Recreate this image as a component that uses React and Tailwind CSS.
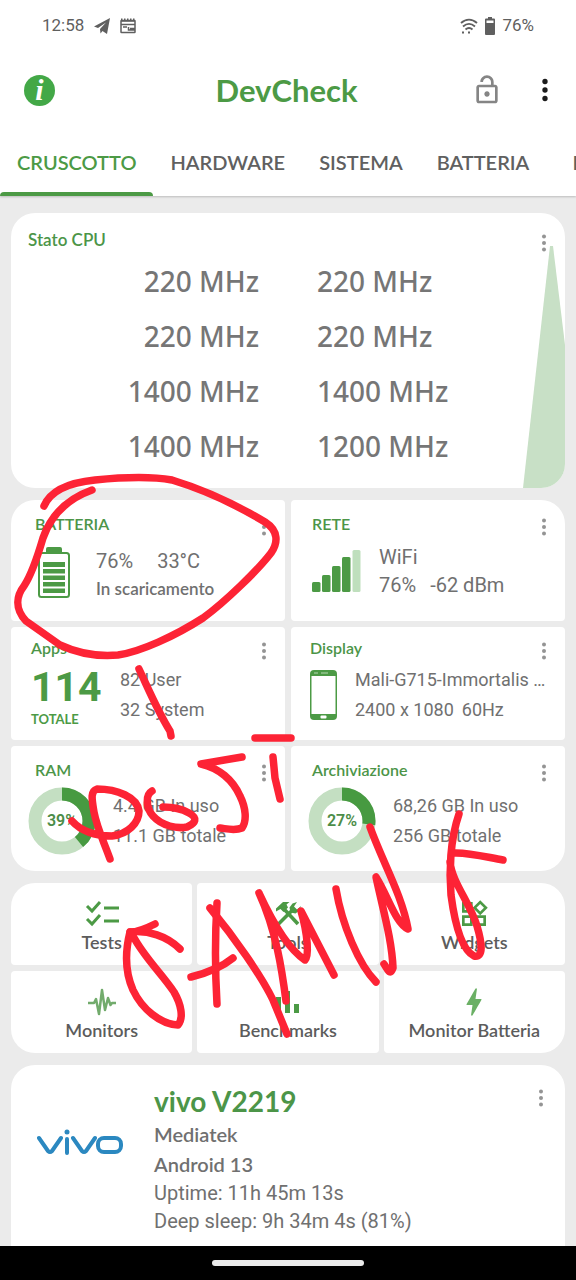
import React, { useState } from "react";
import { MdBolt, MdOutlineLockOpen, MdOutlineWidgets } from "react-icons/md";

const TABS = ["CRUSCOTTO", "HARDWARE", "SISTEMA", "BATTERIA", "RETE"];

const CORES = [
  ["220 MHz", "220 MHz"],
  ["220 MHz", "220 MHz"],
  ["1400 MHz", "1400 MHz"],
  ["1400 MHz", "1200 MHz"],
];

// finger strokes drawn on top of the dashboard
const STROKES = [
  "M44 506C50 492 65 483 95 480C125 477 155 477 172 480C205 490 240 507 265 522C279 531 278 543 271 553C258 570 225 602 203 618C175 636 140 652 118 655C95 657 75 652 60 645L26 621C14 608 17 595 24 586C32 574 38 555 43 538C50 518 64 500 92 490",
  "M139 669C148 688 158 712 170 731L171 736",
  "M255 738H291",
  "M72 821C82 832 98 836 112 836C128 834 139 823 139 811C137 797 117 789 97 789C90 791 92 800 94 812C97 828 104 842 110 859",
  "M152 791C145 795 146 808 153 816C162 826 177 829 187 827C196 823 198 818 189 813C182 809 172 807 163 807",
  "M242 757L201 764C219 768 233 780 240 796C246 808 247 821 242 828C235 831 228 829 220 828",
  "M273 757L275 778L280 799",
  "M155 924C147 928 138 932 130 932C148 930 167 936 180 949",
  "M130 932C125 952 125 972 133 990C142 1009 160 1024 178 1025C184 1018 181 1004 174 992C162 974 144 957 133 936",
  "M217 903C215 935 215 970 217 1004",
  "M191 977C207 973 222 967 233 958",
  "M210 908C235 938 262 977 273 1000L287 1034",
  "M286 1001C282 970 276 930 259 893C272 921 288 949 305 960C309 956 308 935 301 911L334 975",
  "M336 889C342 925 359 965 376 982",
  "M370 827C383 863 402 895 408 929C396 924 388 896 376 877C383 910 392 940 393 968C390 976 388 970 384 964",
  "M459 814C450 840 449 872 451 895C455 925 462 950 474 956C484 958 482 943 477 926C470 903 452 882 450 862",
  "M453 853C468 852 486 857 503 860",
];

function Dots({ className }) {
  return (
    <svg viewBox="0 0 6 20" className={className} fill="currentColor">
      <circle cx="3" cy="3.6" r="2" />
      <circle cx="3" cy="10" r="2" />
      <circle cx="3" cy="16.4" r="2" />
    </svg>
  );
}

function MenuButton() {
  return (
    <button aria-label="Menu" className="mt-[3px] shrink-0 text-[#949494]">
      <Dots className="h-5 w-1.5" />
    </button>
  );
}

function Title({ children }) {
  return (
    <h2 className="font-['Lato',sans-serif] text-base leading-5 font-semibold text-[#4c9548]">
      {children}
    </h2>
  );
}

function Tile({ title, className, children }) {
  return (
    <section className={`rounded-sm bg-white pr-[18px] ${className}`}>
      <div className="flex items-start justify-between">
        <Title>{title}</Title>
        <MenuButton />
      </div>
      {children}
    </section>
  );
}

function Donut({ value }) {
  const length = 2 * Math.PI * 27;
  return (
    <div className="relative flex h-[68px] w-[68px] shrink-0 items-center justify-center">
      <svg viewBox="0 0 68 68" className="absolute inset-0 -rotate-90" fill="none">
        <circle cx="34" cy="34" r="27" stroke="#c4dfc2" strokeWidth="13" />
        <circle
          cx="34"
          cy="34"
          r="27"
          stroke="#479a41"
          strokeWidth="13"
          strokeDasharray={`${(length * value) / 100} ${length}`}
        />
      </svg>
      <span className="relative text-base font-semibold text-[#4c8d48]">{value}%</span>
    </div>
  );
}

function BatteryIcon() {
  return (
    <svg viewBox="0 0 32 52" className="h-[52px] w-8 shrink-0" fill="#4c9a45">
      <rect x="8" y="0" width="16" height="7" rx="2" />
      <rect x="1" y="6" width="30" height="44" rx="2.5" fill="none" stroke="#4c9a45" strokeWidth="2" />
      <path d="M5 15h22v5H5zM5 22h22v4.500H5zM5 28.500h22V33H5zM5 35h22v4.500H5zM5 41.500h22V46H5z" />
    </svg>
  );
}

function SignalIcon() {
  return (
    <svg viewBox="0 0 50 42" className="h-[42px] w-[50px] shrink-0" fill="#4c9a45">
      <rect x="0" y="32" width="8.500" height="10" rx="1.500" />
      <rect x="10" y="25" width="8.500" height="17" rx="1.500" />
      <rect x="20" y="16" width="8.500" height="26" rx="1.500" />
      <rect x="30" y="7" width="8.500" height="35" rx="1.500" />
      <rect x="40.500" y="0" width="8" height="42" rx="1.500" fill="#bfdfbd" />
    </svg>
  );
}

function PhoneIcon() {
  return (
    <svg viewBox="0 0 28 50" className="h-[50px] w-7 shrink-0">
      <rect width="27" height="50" rx="4" fill="#4c9a45" />
      <rect x="1.500" y="6" width="24" height="38" fill="#fff" />
      <rect x="10.500" y="45.500" width="6" height="3" rx="1" fill="#fff" />
      <path d="M4 3h4M11 3h7" stroke="#b7d8b4" />
    </svg>
  );
}

function ChecksIcon() {
  return (
    <svg viewBox="0 0 34 32" className="h-8 w-[34px]" fill="none" stroke="currentColor" strokeWidth="3">
      <path d="M2 8l5 5 8-9M2 21l5 5 8-9M19 10h15M19 23h15" />
    </svg>
  );
}

function ToolsIcon() {
  return (
    <svg viewBox="0 0 32 32" className="h-8 w-8" fill="none" stroke="currentColor" strokeWidth="3.600">
      {/* hammer */}
      <path d="M12 11l14 15" />
      <path d="M4 13.500V10.500L11 4h6.500l-3 2.500 1.500 3-4.500 4.500-3-3z" fill="currentColor" stroke="none" />
      {/* wrench */}
      <path d="M6 26.500L21 11.500" />
      <path d="M25 4l-4.500 1.500-3 4 1 5 5 1 4-3L29 8l-4 3.500-3-3z" fill="currentColor" stroke="none" />
    </svg>
  );
}

function PulseIcon() {
  return (
    <svg viewBox="0 0 32 32" className="h-8 w-8" fill="none" stroke="#72ab6c" strokeWidth="2.500" strokeLinejoin="round">
      <path d="M2 17h6l2-4 3 15 3-24 3 20 3-12 2.500 7 1.500-2h4" />
    </svg>
  );
}

function BarsIcon() {
  return (
    <svg viewBox="0 0 32 32" className="h-8 w-8" fill="#4c9a45">
      <path d="M4 11h5v16H4zM13 5h5v22h-5zM22 18h5v9h-5z" />
    </svg>
  );
}

const ACTIONS = [
  { label: "Tests", icon: <ChecksIcon />, corner: "rounded-tl-3xl" },
  { label: "Tools", icon: <ToolsIcon />, corner: "" },
  { label: "Widgets", icon: <MdOutlineWidgets className="h-8 w-8" />, corner: "rounded-tr-3xl" },
  { label: "Monitors", icon: <PulseIcon />, corner: "rounded-bl-3xl" },
  { label: "Benchmarks", icon: <BarsIcon />, corner: "" },
  { label: "Monitor Batteria", icon: <MdBolt className="h-9 w-9 text-[#6bb065]" />, corner: "rounded-br-3xl" },
];

function StatusBar() {
  return (
    <div className="flex h-[52px] items-center justify-between px-[42px] text-[17px] text-[#5f5f5f]">
      <div className="flex items-center gap-2.5">
        <span>12:58</span>
        <svg viewBox="0 0 16 16" className="h-4 w-4" fill="currentColor">
          <path d="M16 0L13 16L8.500 13L6.500 15.500L6 11L12 4.500L4 10L0 8.500z" />
        </svg>
        <svg viewBox="0 0 16 16" className="h-4 w-4" fill="none" stroke="currentColor" strokeWidth="1.500">
          <rect x="1" y="2.500" width="14" height="12" rx="0.5" />
          <path d="M1 3h14M1 6.500h14M10 10.500h5M8.500 9v3h6.500M3 9h4" />
          <path d="M1 1.200h14" strokeDasharray="1.500 1.500" />
        </svg>
      </div>
      <div className="flex items-center gap-1.5">
        <svg viewBox="0 0 18 18" className="h-[18px] w-[18px]" fill="none" stroke="currentColor" strokeWidth="1.900">
          <path d="M1 6c5-4.500 11-4.500 16 0M3 9.500c4-3.500 8-3.500 12 0M5.500 12.500c2.300-2 4.700-2 7 0" />
          <path d="M8 15.500h2M2 15.500h2" strokeWidth="2" />
        </svg>
        <svg viewBox="0 0 12 18" className="h-[18px] w-3" fill="currentColor">
          <path d="M4 0h4v1.500h2q1 0 1 1V17q0 1-1 1H2q-1 0-1-1V2.500q0-1 1-1h2z" />
          <path d="M2.500 3.500h7V6h-7z" fill="#fff" />
        </svg>
        <span>76%</span>
      </div>
    </div>
  );
}

export default function App() {
  const [activeTab, setActiveTab] = useState("CRUSCOTTO");

  return (
    <div className="relative flex h-screen flex-col overflow-hidden bg-[#ebebeb] font-['Roboto',sans-serif] text-[#707070]">
      <header className="relative shrink-0 bg-white shadow-[0_1px_2px_rgba(0,0,0,0.2)]">
        <StatusBar />

        <div className="grid h-[76px] grid-cols-3 items-center pr-[27px] pl-6">
          <button
            aria-label="Info"
            className="flex h-[31px] w-[31px] items-center justify-center rounded-full bg-[#43a847] font-['Liberation_Serif',serif] text-[30px] leading-none font-bold text-white italic"
          >
            i
          </button>
          <h1 className="text-center font-['Lato',sans-serif] text-[31px] font-bold text-[#4c9a45]">
            DevCheck
          </h1>
          <div className="flex items-center justify-end gap-[38px]">
            <button aria-label="Sblocca" className="text-[#858585]">
              <MdOutlineLockOpen className="h-8 w-8" />
            </button>
            <button aria-label="Altro" className="text-[#1b1b1b]">
              <Dots className="h-7 w-2" />
            </button>
          </div>
        </div>

        {/* Tabs */}
        <nav className="flex h-[68px] overflow-hidden font-['Lato',sans-serif] text-xl font-semibold">
          {TABS.map((tab) => (
            <button
              key={tab}
              onClick={() => setActiveTab(tab)}
              className={`relative min-w-[100px] shrink-0 px-[17px] ${
                activeTab === tab ? "text-[#4c9a45]" : "text-[#606060]"
              }`}
            >
              {tab}
              {activeTab === tab && (
                <span className="absolute inset-x-0 bottom-0 h-1 rounded-t-sm bg-[#4c9a45]" />
              )}
            </button>
          ))}
        </nav>
      </header>

      <main className="flex min-h-0 flex-1 flex-col gap-3 overflow-hidden px-[11px] pt-[17px]">
        {/* CPU */}
        <section className="relative shrink-0 overflow-hidden rounded-3xl bg-white pt-[17px] pb-3.5">
          <svg viewBox="0 0 42 242" className="absolute right-0 bottom-0 h-[242px] w-[42px]" fill="#c8e0c6">
            <path d="M0 242L27 0h3l12 99v143z" />
          </svg>
          <div className="relative flex h-5 items-start justify-between pr-[18px] pl-[17px]">
            <h2 className="font-['Lato',sans-serif] text-[17px] leading-5 font-semibold text-[#4c9548]">Stato CPU</h2>
            <MenuButton />
          </div>
          <div className="mt-1 font-['Noto_Sans',sans-serif] text-[28px] leading-[55px] font-medium text-[#767676]">
            {CORES.map(([left, right], i) => (
              <div key={i} className="grid grid-cols-2 gap-[58px]">
                <span className="text-right">{left}</span>
                <span>{right}</span>
              </div>
            ))}
          </div>
        </section>

        <div className="grid shrink-0 grid-cols-2 gap-1.5 text-lg leading-[30px]">
          <Tile title="BATTERIA" className="h-[121px] rounded-tl-3xl pt-3.5 pl-6">
            <div className="mt-2.5 flex gap-[26px] pl-[3px]">
              <BatteryIcon />
              <div>
                <p className="flex gap-6 text-[20px] leading-7">
                  <span>76%</span>
                  <span>33°C</span>
                </p>
                <p className="font-['Lato',sans-serif] text-[17px] leading-7 font-semibold">In scaricamento</p>
              </div>
            </div>
          </Tile>

          <Tile title="RETE" className="h-[121px] rounded-tr-3xl pt-3.5 pl-[21px]">
            <div className="mt-1.5 flex items-center gap-[17px] text-[20px] leading-7">
              <SignalIcon />
              <div>
                <p>WiFi</p>
                <p className="flex gap-3.5">
                  <span>76%</span>
                  <span>-62 dBm</span>
                </p>
              </div>
            </div>
          </Tile>

          <Tile title="Apps" className="h-[113px] pt-[11px] pl-5">
            <div className="mt-1 flex">
              <div className="w-[89px] shrink-0 font-bold text-[#4c9a45]">
                <p className="text-[41px] leading-[44px]">114</p>
                <p className="font-['Lato',sans-serif] text-[13px] leading-5">TOTALE</p>
              </div>
              <div className="whitespace-nowrap">
                <p>82 User</p>
                <p>32 System</p>
              </div>
            </div>
          </Tile>

          <Tile title="Display" className="h-[113px] pt-[11px] pl-[19px]">
            <div className="mt-1 -mr-1.5 flex items-center gap-[17px] whitespace-nowrap">
              <PhoneIcon />
              <div>
                <p>Mali-G715-Immortalis …</p>
                <p className="flex gap-2">
                  <span>2400 x 1080</span>
                  <span>60Hz</span>
                </p>
              </div>
            </div>
          </Tile>

          <Tile title="RAM" className="h-[125px] rounded-bl-3xl pt-3.5 pl-6">
            <div className="mt-1 -ml-[7px] flex items-center gap-[17px] whitespace-nowrap">
              <Donut value={39} />
              <div>
                <p>4.4 GB In uso</p>
                <p>11.1 GB totale</p>
              </div>
            </div>
          </Tile>

          <Tile title="Archiviazione" className="h-[125px] rounded-br-3xl pt-3.5 pl-[21px]">
            <div className="mt-1 -ml-1 flex items-center gap-[17px] whitespace-nowrap">
              <Donut value={27} />
              <div>
                <p>68,26 GB In uso</p>
                <p>256 GB totale</p>
              </div>
            </div>
          </Tile>
        </div>

        {/* Actions */}
        <div className="grid shrink-0 grid-cols-3 gap-x-[5px] gap-y-1.5">
          {ACTIONS.map(({ label, icon, corner }) => (
            <button
              key={label}
              className={`flex h-[82px] flex-col items-center rounded-sm bg-white pt-[15px] text-[#4c9a45] ${corner}`}
            >
              <span className="flex h-8 items-center">{icon}</span>
              <span className="font-['Lato',sans-serif] text-lg leading-6 font-semibold text-[#5c5c5c]">{label}</span>
            </button>
          ))}
        </div>

        {/* Device */}
        <section className="flex shrink-0 items-start rounded-t-3xl bg-white pt-5 pr-[21px] pb-6 pl-[26px]">
          <svg viewBox="0 0 86 26" className="mt-11 h-[26px] w-[86px]" fill="none" stroke="#2b88c0" strokeWidth="4" strokeLinecap="round" strokeLinejoin="round">
            <path d="M2 9l9 13q2 2 4 0L24 9M30 10v14M36 9l9 13q2 2 4 0L58 9" />
            <rect x="61" y="9" width="23" height="14" rx="6" />
            <circle cx="30" cy="3" r="2.500" fill="#2b88c0" stroke="none" />
          </svg>
          <div className="ml-[31px] flex-1 text-[20px]">
            <h2 className="mb-0.5 font-['Lato',sans-serif] text-[28px] leading-8 font-bold text-[#4c9548]">vivo V2219</h2>
            <p className="font-['Lato',sans-serif] leading-[30px] font-semibold">Mediatek</p>
            <p className="font-['Lato',sans-serif] leading-[30px] font-semibold">Android 13</p>
            <p className="leading-7">Uptime: 11h 45m 13s</p>
            <p className="leading-7">Deep sleep: 9h 34m 4s (81%)</p>
          </div>
          <MenuButton />
        </section>
      </main>

      <footer className="relative flex h-[34px] shrink-0 items-center justify-center bg-black">
        <div className="h-1.5 w-[152px] rounded-full bg-[#ebebeb]" />
      </footer>

      <svg
        viewBox="0 0 576 1280"
        className="pointer-events-none absolute top-0 left-0 w-full"
        fill="none"
        stroke="#fd2335"
        strokeWidth="7.500"
        strokeLinecap="round"
        strokeLinejoin="round"
      >
        {STROKES.map((d) => (
          <path key={d} d={d} />
        ))}
      </svg>
    </div>
  );
}
